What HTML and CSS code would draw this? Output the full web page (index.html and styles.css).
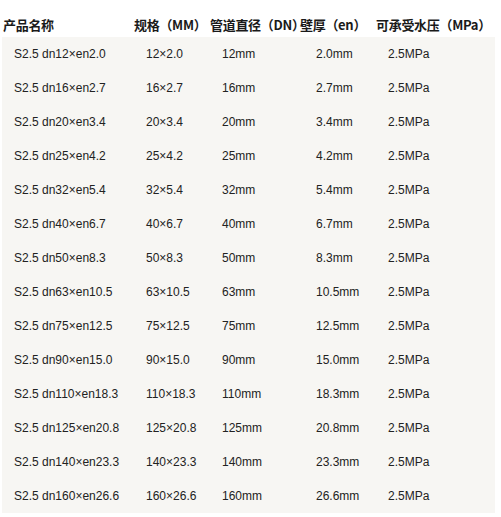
FILE: index.html
```html
<!DOCTYPE html>
<html>
<head>
<meta charset="utf-8">
<link rel="stylesheet" href="styles.css">
</head>
<body>
<div class="table">
  <div class="head">
    <div class="h1">产品名称</div>
    <div class="h2">规格（MM）</div>
    <div class="h3">管道直径（DN）</div>
    <div class="h4">壁厚（en）</div>
    <div class="h5">可承受水压（MPa）</div>
  </div>
  <div class="panel">
    <div class="row"><span>S2.5 dn12×en2.0</span><span>12×2.0</span><span>12mm</span><span>2.0mm</span><span>2.5MPa</span></div>
    <div class="row"><span>S2.5 dn16×en2.7</span><span>16×2.7</span><span>16mm</span><span>2.7mm</span><span>2.5MPa</span></div>
    <div class="row"><span>S2.5 dn20×en3.4</span><span>20×3.4</span><span>20mm</span><span>3.4mm</span><span>2.5MPa</span></div>
    <div class="row"><span>S2.5 dn25×en4.2</span><span>25×4.2</span><span>25mm</span><span>4.2mm</span><span>2.5MPa</span></div>
    <div class="row"><span>S2.5 dn32×en5.4</span><span>32×5.4</span><span>32mm</span><span>5.4mm</span><span>2.5MPa</span></div>
    <div class="row"><span>S2.5 dn40×en6.7</span><span>40×6.7</span><span>40mm</span><span>6.7mm</span><span>2.5MPa</span></div>
    <div class="row"><span>S2.5 dn50×en8.3</span><span>50×8.3</span><span>50mm</span><span>8.3mm</span><span>2.5MPa</span></div>
    <div class="row"><span>S2.5 dn63×en10.5</span><span>63×10.5</span><span>63mm</span><span>10.5mm</span><span>2.5MPa</span></div>
    <div class="row"><span>S2.5 dn75×en12.5</span><span>75×12.5</span><span>75mm</span><span>12.5mm</span><span>2.5MPa</span></div>
    <div class="row"><span>S2.5 dn90×en15.0</span><span>90×15.0</span><span>90mm</span><span>15.0mm</span><span>2.5MPa</span></div>
    <div class="row"><span>S2.5 dn110×en18.3</span><span>110×18.3</span><span>110mm</span><span>18.3mm</span><span>2.5MPa</span></div>
    <div class="row"><span>S2.5 dn125×en20.8</span><span>125×20.8</span><span>125mm</span><span>20.8mm</span><span>2.5MPa</span></div>
    <div class="row"><span>S2.5 dn140×en23.3</span><span>140×23.3</span><span>140mm</span><span>23.3mm</span><span>2.5MPa</span></div>
    <div class="row"><span>S2.5 dn160×en26.6</span><span>160×26.6</span><span>160mm</span><span>26.6mm</span><span>2.5MPa</span></div>
  </div>
</div>
</body>
</html>
```
FILE: styles.css
```css
html, body {
  margin: 0;
  padding: 0;
  background: #ffffff;
}
.table {
  width: 501px;
  color: #222222;
}
.head {
  display: grid;
  grid-template-columns: 131px 76px 90px 76px auto;
  height: 37px;
  align-items: end;
  padding-left: 3px;
  box-sizing: border-box;
  padding-bottom: 5px;
  font-family: "Noto Sans CJK SC", sans-serif;
  font-weight: bold;
  font-size: 13px;
  line-height: 14px;
  letter-spacing: -0.3px;
  color: #1a1a1a;
  white-space: nowrap;
}
.panel {
  margin-left: 2px;
  width: 493px;
  background: #f7f6f3;
}
.row {
  display: grid;
  grid-template-columns: 132px 76px 94px 72px auto;
  height: 34px;
  align-items: center;
  padding-left: 12px;
  font-family: "Liberation Sans", Arial, sans-serif;
  font-size: 12px;
  color: #222222;
  white-space: nowrap;
}
```
